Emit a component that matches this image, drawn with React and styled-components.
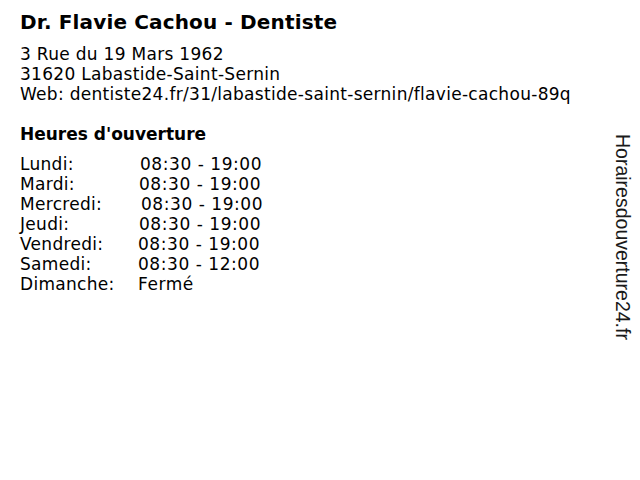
import React from 'react';
import styled, { createGlobalStyle } from 'styled-components';

const GlobalStyle = createGlobalStyle`
  html, body {
    margin: 0;
    padding: 0;
    background: #ffffff;
  }
`;

const Page = styled.div`
  width: 640px;
  height: 480px;
  display: flex;
  justify-content: space-between;
  color: #000;
  font-family: "DejaVu Sans", Verdana, sans-serif;
`;

const Main = styled.div`
  padding: 10px 0 0 20px;
  display: flex;
  flex-direction: column;
`;

const Title = styled.h1`
  margin: 0 0 10px;
  font-size: 20px;
  font-weight: bold;
  letter-spacing: 0.15px;
  line-height: 24px;
`;

const Address = styled.div`
  font-size: 17px;
  letter-spacing: 0.3px;
  line-height: 20px;
`;

const SectionTitle = styled.h2`
  margin: 20px 0 10px;
  font-size: 17px;
  font-weight: bold;
  line-height: 20px;
`;

const Hours = styled.div`
  display: grid;
  grid-template-columns: 118px auto;
  font-size: 17px;
  letter-spacing: 0.3px;
  line-height: 20px;
`;

const Day = styled.div``;

const Time = styled.div`
  padding-left: ${({ shift }) => shift || 0}px;
  letter-spacing: 0.55px;
`;

const Side = styled.div`
  writing-mode: vertical-rl;
  font-family: "Liberation Sans", Arial, sans-serif;
  font-size: 19.5px;
  color: #1a1a1a;
  padding: 134px 6px 0 0;
`;

const hours = [
  ['Lundi:', '08:30 - 19:00', 2],
  ['Mardi:', '08:30 - 19:00', 1],
  ['Mercredi:', '08:30 - 19:00', 3],
  ['Jeudi:', '08:30 - 19:00', 1],
  ['Vendredi:', '08:30 - 19:00', 0],
  ['Samedi:', '08:30 - 12:00', 0],
  ['Dimanche:', 'Fermé', 0],
];

export default function App() {
  return (
    <>
      <GlobalStyle />
      <Page>
        <Main>
          <Title>Dr. Flavie Cachou - Dentiste</Title>
          <Address>
            <div>3 Rue du 19 Mars 1962</div>
            <div>31620 Labastide-Saint-Sernin</div>
            <div>Web: dentiste24.fr/31/labastide-saint-sernin/flavie-cachou-89q</div>
          </Address>
          <SectionTitle>Heures d'ouverture</SectionTitle>
          <Hours>
            {hours.map(([day, time, shift]) => (
              <React.Fragment key={day}>
                <Day>{day}</Day>
                <Time shift={shift}>{time}</Time>
              </React.Fragment>
            ))}
          </Hours>
        </Main>
        <Side>Horairesdouverture24.fr</Side>
      </Page>
    </>
  );
}
